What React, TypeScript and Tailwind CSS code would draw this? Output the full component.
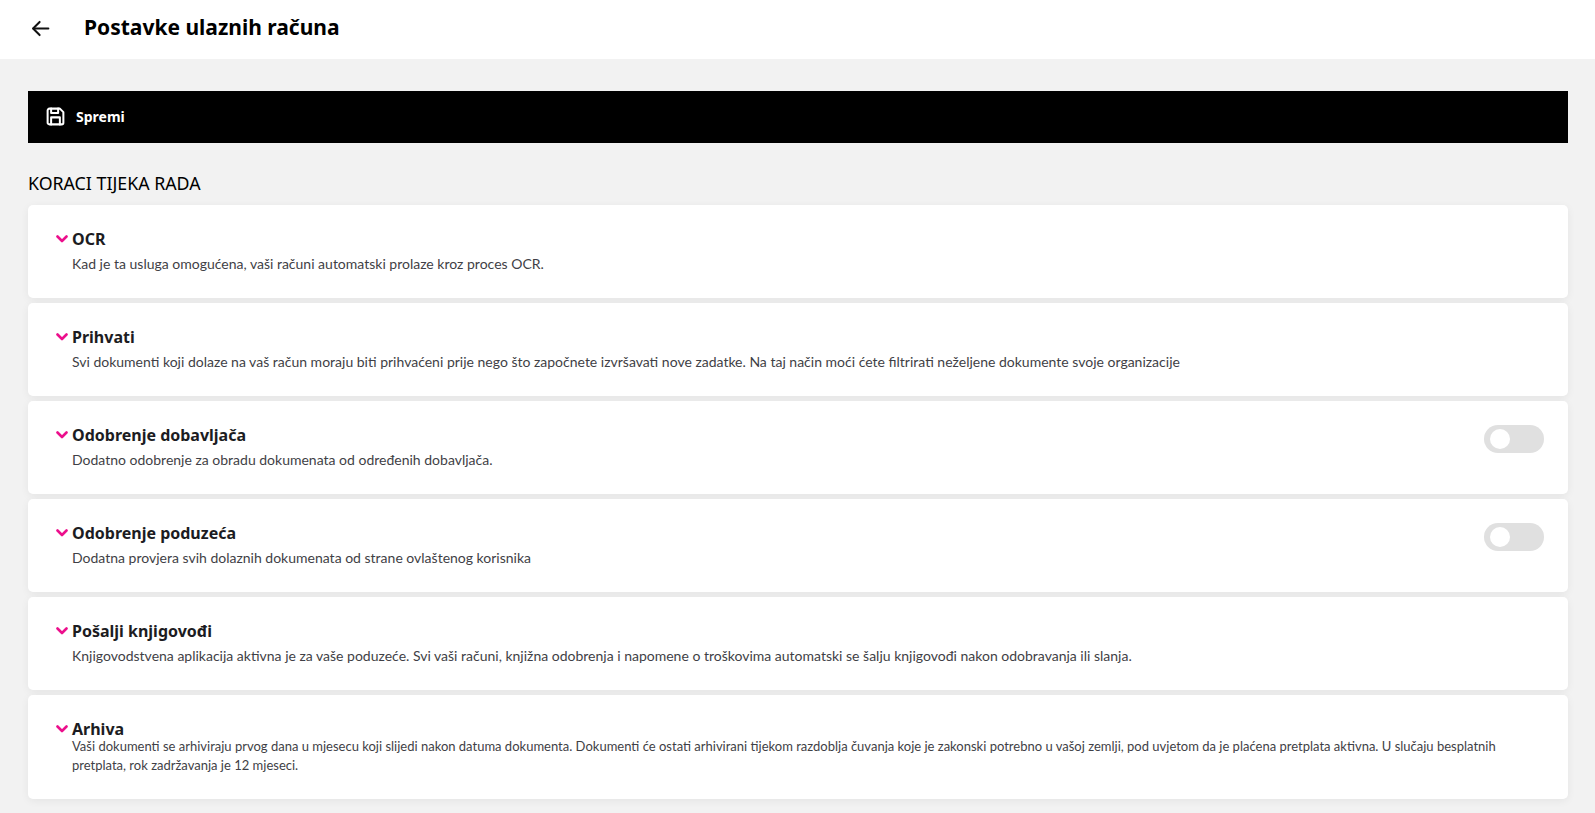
import React from "react";

const steps = [
  { title: "OCR", text: "Kad je ta usluga omogućena, vaši računi automatski prolaze kroz proces OCR." },
  { title: "Prihvati", text: "Svi dokumenti koji dolaze na vaš račun moraju biti prihvaćeni prije nego što započnete izvršavati nove zadatke. Na taj način moći ćete filtrirati neželjene dokumente svoje organizacije" },
  { title: "Odobrenje dobavljača", text: "Dodatno odobrenje za obradu dokumenata od određenih dobavljača.", toggle: true },
  { title: "Odobrenje poduzeća", text: "Dodatna provjera svih dolaznih dokumenata od strane ovlaštenog korisnika", toggle: true },
  { title: "Pošalji knjigovođi", text: "Knjigovodstvena aplikacija aktivna je za vaše poduzeće. Svi vaši računi, knjižna odobrenja i napomene o troškovima automatski se šalju knjigovođi nakon odobravanja ili slanja." },
  { title: "Arhiva", tight: true, text: "Vaši dokumenti se arhiviraju prvog dana u mjesecu koji slijedi nakon datuma dokumenta. Dokumenti će ostati arhivirani tijekom razdoblja čuvanja koje je zakonski potrebno u vašoj zemlji, pod uvjetom da je plaćena pretplata aktivna. U slučaju besplatnih pretplata, rok zadržavanja je 12 mjeseci." },
];

function Card({ title, text, toggle, tight }: { title: string; text: string; toggle?: boolean; tight?: boolean }) {
  return (
    <div className={`flex justify-between rounded-[5px] bg-white pl-[28px] pr-[24px] pt-[22px] shadow-[0_2px_8px_rgba(0,0,0,0.06)] ${tight ? "h-[104px]" : "h-[93px]"}`}>
      <div className="min-w-0 flex-1 pr-[45px]">
        <div className="flex h-[24px] items-center">
          <svg width="12" height="8" viewBox="0 0 12 8" className="mr-[4px] shrink-0" fill="none">
            <path d="M1.5 1.5 6 6l4.5-4.5" stroke="#ec0f8c" strokeWidth="2.6" strokeLinecap="round" strokeLinejoin="round" />
          </svg>
          <h3 className="font-['Noto_Sans',sans-serif] text-[16px] font-bold leading-[24px] text-[#1c1c22]">{title}</h3>
        </div>
        <p className={`ml-[16px] font-['Lato',sans-serif] text-[#3f3f46] ${tight ? "-mt-[4px] text-[13px] leading-[19px]" : "mt-[4px] text-[14px] leading-[18px]"}`}>{text}</p>
      </div>
      {toggle && (
        <div className="mt-[2px] flex h-[28px] w-[60px] shrink-0 items-center rounded-full bg-[#e0e0e0] pl-[6px]">
          <div className="h-[20px] w-[20px] rounded-full bg-white" />
        </div>
      )}
    </div>
  );
}

export default function App() {
  return (
    <div className="h-[813px] overflow-hidden bg-[#f2f2f2]">
      <header className="flex h-[59px] items-center bg-white pb-[3px] pl-[30px]">
        <svg width="21" height="21" viewBox="0 0 24 24" fill="none" stroke="#111" strokeWidth="2.3" strokeLinecap="round" strokeLinejoin="round">
          <path d="M21 12H4" />
          <path d="M11 4.5 3.5 12l7.5 7.5" />
        </svg>
        <h1 className="ml-[33px] font-['Noto_Sans',sans-serif] text-[21px] font-bold text-black">Postavke ulaznih računa</h1>
      </header>
      <main className="pl-[28px] pr-[27px] pt-[32px]">
        <div className="flex h-[52px] items-center bg-black pb-[1px] pl-[17px]">
          <svg width="21" height="21" viewBox="0 0 24 24" fill="none" stroke="#fff" strokeWidth="2.3" strokeLinecap="round" strokeLinejoin="round">
            <path d="M5 3h12l4 4v12a2 2 0 0 1-2 2H5a2 2 0 0 1-2-2V5a2 2 0 0 1 2-2z" />
            <path d="M7 3v5h8V3" />
            <path d="M7 21v-8h10v8" />
          </svg>
          <span className="ml-[10px] font-['Noto_Sans',sans-serif] text-[14px] font-bold text-white">Spremi</span>
        </div>
        <h2 className="mt-[28px] mb-[10px] font-['Noto_Sans',sans-serif] text-[17.8px] font-normal leading-[24px] text-black">KORACI TIJEKA RADA</h2>
        <div className="flex flex-col gap-[5px]">
          {steps.map((s) => (
            <Card key={s.title} {...s} />
          ))}
        </div>
      </main>
    </div>
  );
}
